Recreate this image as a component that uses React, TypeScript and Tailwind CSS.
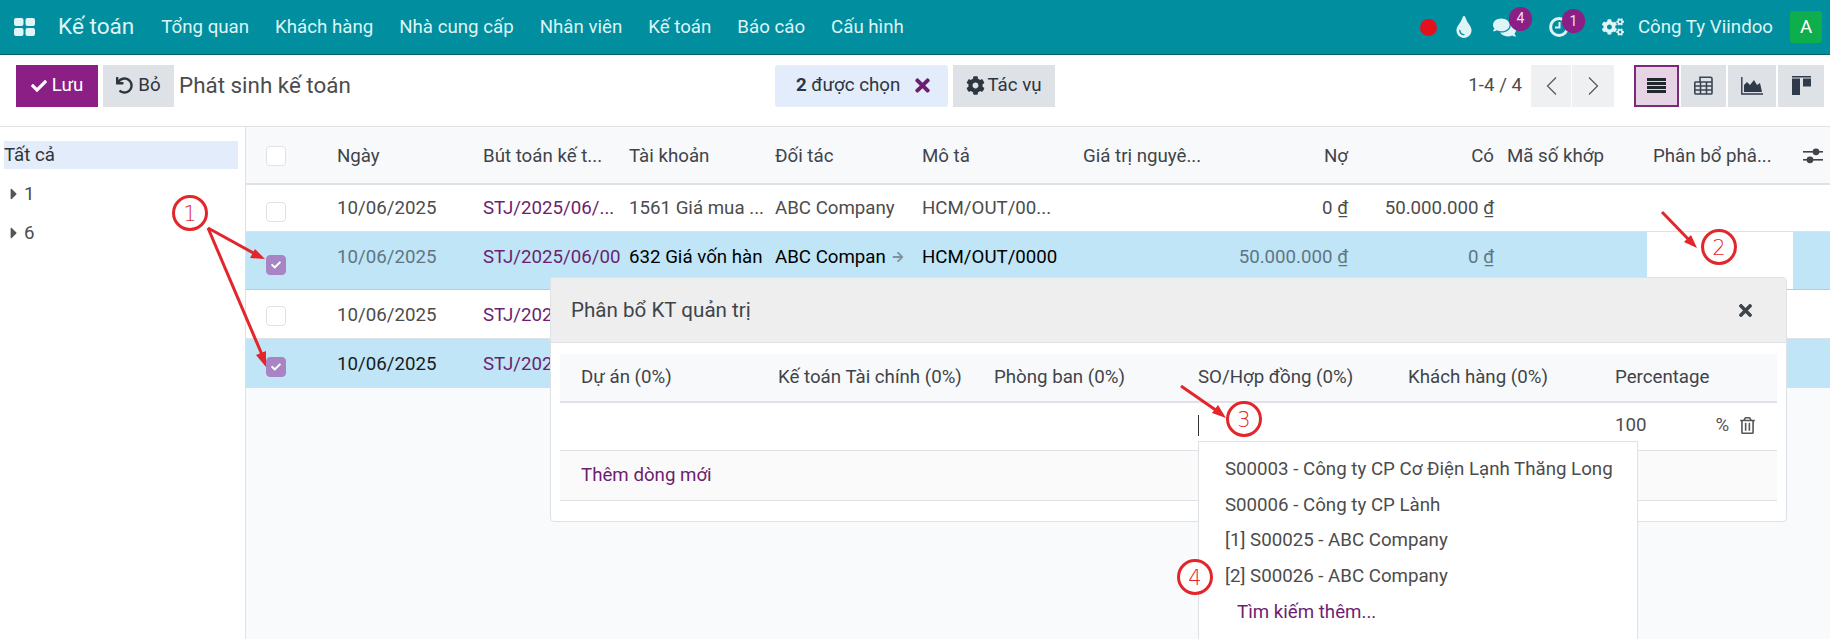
import { FaCaretRight, FaCheck, FaCog, FaCogs, FaComments, FaArrowRight, FaRegTrashAlt, FaTimes, FaTint, FaUndo } from 'react-icons/fa';

const menu = ['Tổng quan', 'Khách hàng', 'Nhà cung cấp', 'Nhân viên', 'Kế toán', 'Báo cáo', 'Cấu hình'];
const cols = 'grid grid-cols-[79px_146px_146px_146px_147px_161px_148px_141px_146px_141px_146px_37px]';

function Check({ on, className }: { on?: boolean; className: string }) {
  return (
    <span className={`flex h-5 w-5 items-center justify-center rounded-[4px] border ${on ? 'border-[#a884c4] bg-[#a884c4]' : 'border-[#dee2e6] bg-white'} ${className}`}>
      {on && <FaCheck className="text-white" size={10} />}
    </span>
  );
}

function Badge({ n, className }: { n: number; className: string }) {
  return (
    <span className={`absolute flex h-[24px] w-[23px] items-center justify-center rounded-full bg-[#8b1f86] text-[14px] text-[#f3dff2] ${className}`}>
      {n}
    </span>
  );
}

function Marks() {
  const red = '#e2262b';
  const circles = [
    [190, 213, '1'],
    [1719, 247, '2'],
    [1244, 419, '3'],
    [1195, 577, '4'],
  ] as const;
  return (
    <svg className="pointer-events-none absolute left-0 top-0" width="1830" height="639">
      <g stroke={red} strokeWidth="3" fill="none">
        <line x1="208" y1="228" x2="257" y2="255" />
        <line x1="208" y1="228" x2="263" y2="357" />
        <line x1="1662" y1="212" x2="1692" y2="243" />
        <line x1="1181" y1="386" x2="1220" y2="413" />
      </g>
      <g fill={red}>
        <polygon points="265,259 250,258 255,249" />
        <polygon points="266,367 256,355 266,351" />
        <polygon points="1697,248 1684,242 1691,235" />
        <polygon points="1226,418 1212,413 1218,405" />
      </g>
      {circles.map(([x, y, t]) => (
        <g key={t}>
          <circle cx={x} cy={y} r="16.5" fill="white" stroke={red} strokeWidth="3" />
          <text x={x} y={y + 8} textAnchor="middle" fontSize="21" fill={red} fontFamily="'DejaVu Sans', sans-serif" fontWeight="300">
            {t}
          </text>
        </g>
      ))}
    </svg>
  );
}

export default function App() {
  return (
    <div className="relative h-[639px] w-[1830px] overflow-hidden bg-white font-['Roboto',sans-serif] text-[18.7px] text-[#4c4c4c]">
      {/* top bar */}
      <div className="flex h-[55px] items-center border-b border-[#0b5f69] bg-[#018f9f] pl-[14px] text-[#dff4f6]">
        <svg width="21" height="18" viewBox="0 0 21 18" fill="#dff4f6">
          <rect x="0" y="0" width="9.5" height="8" rx="2" />
          <rect x="11.5" y="0" width="9.5" height="8" rx="2" />
          <rect x="0" y="10" width="9.5" height="8" rx="2" />
          <rect x="11.5" y="10" width="9.5" height="8" rx="2" />
        </svg>
        <span className="ml-[23px] text-[22.6px]">Kế toán</span>
        <div className="ml-[27px] flex gap-[26px]">
          {menu.map((m, i) => (
            <span key={i}>{m}</span>
          ))}
        </div>
        <div className="ml-auto flex items-center pr-[8px]">
          <span className="h-[17px] w-[17px] rounded-full bg-[#e3101d]" />
          <FaTint className="ml-[16px]" size={22} />
          <span className="relative ml-[18px] flex">
            <FaComments size={23} />
            <Badge n={4} className="-top-[9px] left-[16px]" />
          </span>
          <span className="relative ml-[33px] flex">
            <svg width="20" height="20" viewBox="0 0 20 20" fill="none" stroke="#dff4f6" strokeWidth="3">
              <circle cx="10" cy="10" r="8.4" />
              <path d="M10.5 5v5.5H6" strokeWidth="2" />
            </svg>
            <Badge n={1} className="-top-[8px] left-[13px]" />
          </span>
          <FaCogs className="ml-[33px]" size={22} />
          <span className="ml-[14px]">Công Ty Viindoo</span>
          <span className="ml-[17px] flex h-[32px] w-[32px] items-center justify-center rounded-[3px] bg-[#0fae4d] text-white">A</span>
        </div>
      </div>

      {/* control panel */}
      <div className="flex h-[72px] items-center border-b border-[#dee2e6] pb-[10px] pl-[16px]">
        <button className="flex h-[42px] w-[82px] items-center justify-center gap-[5px] bg-[#8b1f86] text-white">
          <FaCheck size={16} />
          Lưu
        </button>
        <button className="ml-[5px] flex h-[42px] w-[71px] items-center justify-center gap-[5px] bg-[#dee2e6] text-[#2c3540]">
          <FaUndo size={17} />
          Bỏ
        </button>
        <span className="ml-[5px] w-[596px] text-[22.4px]">Phát sinh kế toán</span>
        <div className="flex h-[42px] w-[173px] items-center gap-[12px] rounded-[3px] bg-[#e2ecfb] pl-[21px] text-[#2c3540]">
          <span>
            <b className="font-bold">2</b> được chọn
          </span>
          <FaTimes className="text-[#6d1e70]" size={21} />
        </div>
        <button className="ml-[5px] flex h-[42px] w-[102px] items-center justify-center gap-[2px] bg-[#dee2e6] text-[#2c3540]">
          <FaCog size={19} />
          Tác vụ
        </button>
        <span className="ml-auto">1-4 / 4</span>
        <div className="ml-[9px] flex h-[42px] w-[83px] bg-[#eef0f2]">
          <span className="flex w-[41px] items-center justify-center border-r border-white">
            <svg width="11" height="18" viewBox="0 0 11 18" fill="none" stroke="#555" strokeWidth="1.2"><path d="M10 0.5 1.5 9 10 17.5" /></svg>
          </span>
          <span className="flex flex-1 items-center justify-center">
            <svg width="11" height="18" viewBox="0 0 11 18" fill="none" stroke="#555" strokeWidth="1.2"><path d="M1 0.5 9.5 9 1 17.5" /></svg>
          </span>
        </div>
        <div className="ml-[20px] flex h-[42px] gap-[2px] pr-[6px]">
          <span className="flex w-[45px] items-center justify-center border-2 border-[#7a2a78] bg-[#e6d3e3]">
            <svg width="19" height="15" viewBox="0 0 19 15" fill="#23272e">
              <rect y="0" width="19" height="3" />
              <rect y="4" width="19" height="3" />
              <rect y="8" width="19" height="3" />
              <rect y="12" width="19" height="3" />
            </svg>
          </span>
          <span className="flex w-[45px] items-center justify-center bg-[#dee2e6]">
            <svg width="19" height="19" viewBox="0 0 19 19" fill="none" stroke="#3a4452" strokeWidth="1.6">
              <path d="M6 6V1.2h10.5a1.5 1.5 0 0 1 1.5 1.5V17a1.2 1.2 0 0 1-1.2 1H2a1.2 1.2 0 0 1-1.2-1V7A1 1 0 0 1 2 6h16M1 10h17M1 14h17M6.5 6v12M12.5 6v12" />
            </svg>
          </span>
          <span className="flex w-[48px] items-center justify-center bg-[#dee2e6]">
            <svg width="22" height="18" viewBox="0 0 22 18" fill="#2f3a4a">
              <path d="M3 15V8l3-3 3 3 4-5 3 5 3-2 2 9z" />
              <path d="M0.8 0v17H22" fill="none" stroke="#2f3a4a" strokeWidth="1.4" />
            </svg>
          </span>
          <span className="flex w-[46px] items-center justify-center bg-[#dee2e6]">
            <svg width="19" height="19" viewBox="0 0 19 19" fill="#2f3a4a">
              <rect width="19" height="1.5" />
              <rect y="2.5" width="8" height="16.5" />
              <rect x="11" y="2.5" width="8" height="8" />
            </svg>
          </span>
        </div>
      </div>

      <div className="flex h-[512px]">
        {/* search panel */}
        <aside className="w-[246px] shrink-0 border-r border-[#dee2e6] px-[4px] pt-[14px]">
          <div className="flex h-[28px] w-[234px] items-center bg-[#e2ecfb] text-[#333]">Tất cả</div>
          <div className="mt-[11px] flex h-[28px] items-center pl-[1px]">
            <FaCaretRight size={18} className="text-[#555]" />
            <span className="ml-[1px]">1</span>
          </div>
          <div className="mt-[11px] flex h-[28px] items-center pl-[1px]">
            <FaCaretRight size={18} className="text-[#555]" />
            <span className="ml-[1px]">6</span>
          </div>
        </aside>

        {/* list */}
        <main className="flex-1 bg-[#f9fafb]">
          <div className={`${cols} h-[58px] items-center border-b-2 border-[#dee2e6] bg-[#f8f9fa] pt-[2px] text-[#3f444a]`}>
            <span className="pl-[20px]"><Check className="" /></span>
            <span className="pl-[12px]">Ngày</span>
            <span className="truncate pl-[12px]">Bút toán kế t...</span>
            <span className="pl-[12px]">Tài khoản</span>
            <span className="pl-[12px]">Đối tác</span>
            <span className="pl-[12px]">Mô tả</span>
            <span className="truncate pl-[12px]">Giá trị nguyê...</span>
            <span className="pr-[12px] text-right">Nợ</span>
            <span className="pr-[12px] text-right">Có</span>
            <span className="pl-[1px]">Mã số khớp</span>
            <span className="truncate pl-[6px]">Phân bổ phâ...</span>
            <span className="flex pl-[10px]">
              <svg width="20" height="16" viewBox="0 0 20 16" fill="#3f444a">
                <rect y="3" width="20" height="1.6" />
                <circle cx="13" cy="3.8" r="3.4" />
                <rect y="11" width="20" height="1.6" />
                <circle cx="7" cy="11.8" r="3.4" />
              </svg>
            </span>
          </div>

          <div className={`${cols} h-[47px] items-center border-b border-[#dee2e6] bg-white`}>
            <span className="pl-[20px]"><Check className="mt-[8px]" /></span>
            <span className="pl-[12px]">10/06/2025</span>
            <span className="whitespace-nowrap pl-[12px] text-[#6d1e70]">STJ/2025/06/...</span>
            <span className="whitespace-nowrap pl-[12px]">1561 Giá mua ...</span>
            <span className="pl-[12px]">ABC Company</span>
            <span className="whitespace-nowrap pl-[12px]">HCM/OUT/00...</span>
            <span />
            <span className="pr-[12px] text-right">0 <u>₫</u></span>
            <span className="pr-[12px] text-right">50.000.000 <u>₫</u></span>
            <span />
            <span />
            <span />
          </div>

          <div className={`${cols} h-[58px] border-b border-[#a9cfe3] bg-[#bfe5f7] pt-[11px] text-[#5f7583]`}>
            <span className="pl-[20px]"><Check on className="mt-[12px]" /></span>
            <span className="pl-[12px]">10/06/2025</span>
            <span className="whitespace-nowrap pl-[12px] text-[#6d1e70]">STJ/2025/06/00</span>
            <span className="whitespace-nowrap pl-[12px] text-black">632 Giá vốn hàn</span>
            <span className="flex items-center whitespace-nowrap self-start pl-[12px] text-black">
              ABC Compan
              <FaArrowRight className="ml-[6px] text-[#7f929e]" size={12} />
            </span>
            <span className="whitespace-nowrap pl-[12px] text-black">HCM/OUT/0000</span>
            <span />
            <span className="pr-[12px] text-right">50.000.000 <u>₫</u></span>
            <span className="pr-[12px] text-right">0 <u>₫</u></span>
            <span />
            <span className="-mt-[11px] bg-white" />
            <span />
          </div>

          <div className={`${cols} h-[49px] items-center border-b border-[#dee2e6] bg-white pt-[2px]`}>
            <span className="pl-[20px]"><Check className="mt-[1px]" /></span>
            <span className="pl-[12px]">10/06/2025</span>
            <span className="pl-[12px] text-[#6d1e70]">STJ/2025</span>
          </div>

          <div className={`${cols} h-[49px] items-center bg-[#bfe5f7] pt-[2px] text-[#1a1a1a]`}>
            <span className="pl-[20px]"><Check on className="mt-[4px]" /></span>
            <span className="pl-[12px]">10/06/2025</span>
            <span className="pl-[12px] text-[#6d1e70]">STJ/2025</span>
          </div>
        </main>
      </div>

      {/* analytic distribution popup */}
      <div className="absolute left-[550px] top-[277px] h-[245px] w-[1237px] rounded-[4px] border border-[#dee2e6] bg-white">
        <div className="flex h-[65px] items-center justify-between border-b border-[#dee2e6] bg-[#eeeeee] pl-[20px] pr-[31px] text-[20.6px] text-[#3f444a]">
          Phân bổ KT quản trị
          <FaTimes size={19} className="text-[#3f444a]" />
        </div>
        <div className="mx-[9px] mt-[11px]">
          <div className="grid h-[49px] grid-cols-[197px_216px_204px_210px_207px_1fr] items-center border-b-2 border-[#dee2e6] bg-[#f8f9fa] pl-[21px] text-[#3f444a]">
            <span className="whitespace-nowrap">Dự án (0%)</span>
            <span className="whitespace-nowrap">Kế toán Tài chính (0%)</span>
            <span className="whitespace-nowrap">Phòng ban (0%)</span>
            <span className="whitespace-nowrap">SO/Hợp đồng (0%)</span>
            <span className="whitespace-nowrap">Khách hàng (0%)</span>
            <span>Percentage</span>
          </div>
          <div className="flex h-[48px] items-center border-b border-[#dee2e6] pb-[2px] pl-[638px]">
            <span className="h-[21px] w-px bg-[#333]" />
            <span className="ml-[416px]">100</span>
            <span className="ml-[69px] text-[#555]">%</span>
            <FaRegTrashAlt size={17} className="ml-[10px] text-[#555]" />
          </div>
          <div className="flex h-[50px] items-center border-b border-[#dee2e6] bg-[#fafafa] pl-[21px] text-[#6d1e70]">Thêm dòng mới</div>
        </div>
      </div>

      {/* autocomplete */}
      <div className="absolute left-[1198px] top-[441px] h-[220px] w-[440px] border border-[#dee2e6] bg-white pl-[26px] pt-[9px]">
        <div className="flex h-[35.7px] items-center">S00003 - Công ty CP Cơ Điện Lạnh Thăng Long</div>
        <div className="flex h-[35.7px] items-center">S00006 - Công ty CP Lành</div>
        <div className="flex h-[35.7px] items-center">[1] S00025 - ABC Company</div>
        <div className="flex h-[35.7px] items-center">[2] S00026 - ABC Company</div>
        <div className="flex h-[35.7px] items-center pl-[12px] text-[#6d1e70]">Tìm kiếm thêm...</div>
      </div>

      <Marks />
    </div>
  );
}
